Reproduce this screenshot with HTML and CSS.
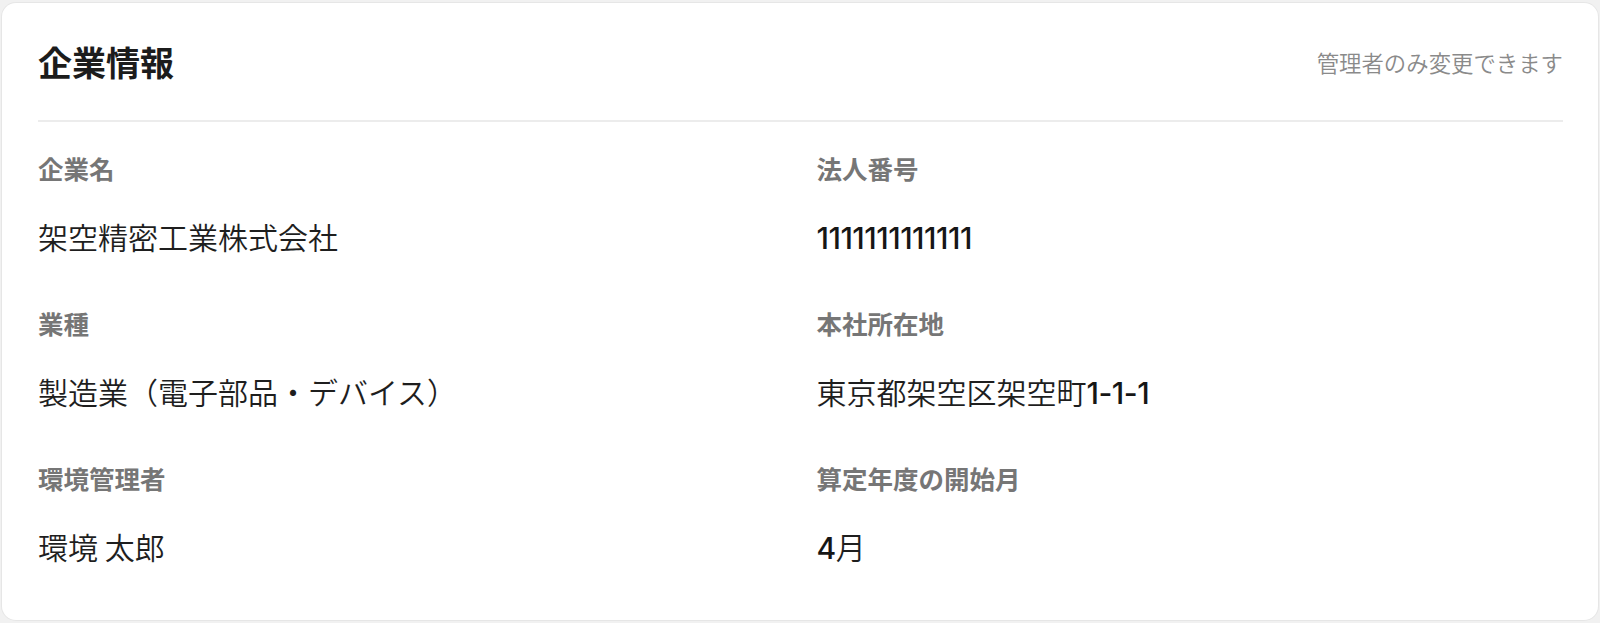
FILE: index.html
```html
<!DOCTYPE html>
<html lang="ja">
<head>
<meta charset="utf-8">
<title>企業情報</title>
<link rel="stylesheet" href="styles.css">
</head>
<body>
  <section class="card">
    <header class="card-header">
      <h1 class="card-title">企業情報</h1>
      <p class="card-note">管理者のみ変更できます</p>
    </header>
    <dl class="info-grid">
      <div class="field">
        <dt class="field-label">企業名</dt>
        <dd class="field-value">架空精密工業株式会社</dd>
      </div>
      <div class="field">
        <dt class="field-label">法人番号</dt>
        <dd class="field-value"><span class="num">1111111111111</span></dd>
      </div>
      <div class="field">
        <dt class="field-label">業種</dt>
        <dd class="field-value">製造業（電子部品・デバイス）</dd>
      </div>
      <div class="field">
        <dt class="field-label">本社所在地</dt>
        <dd class="field-value">東京都架空区架空町<span class="num">1-1-1</span></dd>
      </div>
      <div class="field">
        <dt class="field-label">環境管理者</dt>
        <dd class="field-value">環境 太郎</dd>
      </div>
      <div class="field">
        <dt class="field-label">算定年度の開始月</dt>
        <dd class="field-value"><span class="num">4</span>月</dd>
      </div>
    </dl>
  </section>
</body>
</html>
```

FILE: styles.css
```css
html, body {
  margin: 0;
  padding: 0;
}

body {
  background: #f1f1f1;
  padding: 3px 2px 3px 2px;
  font-family: "Noto Sans CJK JP", sans-serif;
  color: #1f1f1f;
}

.card {
  background: #ffffff;
  border-radius: 14px;
  box-shadow: 0 0 0 1px #e6e6e6;
  padding: 0 35px 50px 36px;
  height: 617px;
  box-sizing: border-box;
}

.card-header {
  display: flex;
  align-items: center;
  justify-content: space-between;
  padding: 38px 0 38px;
  border-bottom: 2px solid #ececec;
}

.card-title {
  margin: 0;
  font-size: 34px;
  line-height: 41px;
  font-weight: 700;
  color: #1c1c1c;
}

.card-note {
  margin: 0;
  font-size: 22.4px;
  line-height: 30px;
  font-weight: 350;
  color: #8a8a8a;
}

.info-grid {
  display: grid;
  grid-template-columns: 1fr 1fr;
  column-gap: 32px;
  row-gap: 47px;
  margin: 0;
  padding-top: 28px;
}

.field {
  display: flex;
  flex-direction: column;
  gap: 30px;
}

.field-label {
  margin: 0;
  font-size: 25.5px;
  line-height: 36px;
  font-weight: 700;
  color: #767676;
}

.field-value {
  margin: 0;
  font-size: 30px;
  line-height: 40px;
  font-weight: 350;
  color: #1e1e1e;
}

/* numbers are set in Inter at medium weight */
.num {
  font-family: Inter, "Liberation Sans", sans-serif;
  font-weight: 500;
  letter-spacing: -0.5px;
  color: #161616;
}
```
